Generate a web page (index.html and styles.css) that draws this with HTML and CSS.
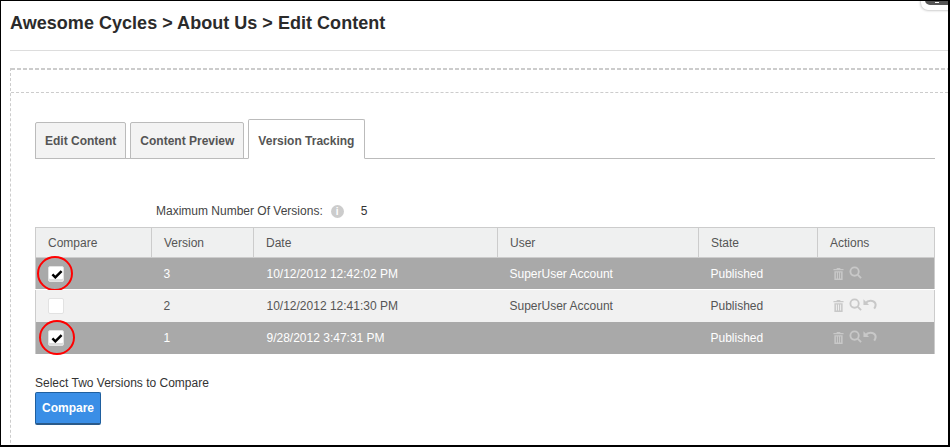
FILE: index.html
```html
<!DOCTYPE html>
<html lang="en">
<head>
    <meta charset="UTF-8">
    <title>Edit Content</title>
    <link rel="stylesheet" href="styles.css">
</head>
<body>
    <div class="frame">
        <div class="corner"><span class="corner-inner"></span></div>

        <h1 class="title">Awesome Cycles &gt; About Us &gt; Edit Content</h1>

        <div class="zone">
            <div class="zone-head"></div>
            <div class="zone-body">
                <ul class="tabs">
                    <li class="tab">Edit Content</li>
                    <li class="tab">Content Preview</li>
                    <li class="tab tab-active">Version Tracking</li>
                </ul>

                <p class="max-versions">
                    <span>Maximum Number Of Versions:</span>
                    <span class="info">i</span>
                    <span class="max-value">5</span>
                </p>

                <table class="versions">
                    <colgroup>
                        <col class="col-compare">
                        <col class="col-version">
                        <col class="col-date">
                        <col class="col-user">
                        <col class="col-state">
                        <col class="col-actions">
                    </colgroup>
                    <thead>
                        <tr>
                            <th>Compare</th>
                            <th>Version</th>
                            <th>Date</th>
                            <th>User</th>
                            <th>State</th>
                            <th>Actions</th>
                        </tr>
                    </thead>
                    <tbody>
                        <tr class="selected">
                            <td class="check-cell">
                                <span class="check on">
                                    <svg viewBox="0 0 14 12" class="tick"><path d="M1.5 6.5 L5 10 L12.5 2.5"/></svg>
                                </span>
                                <span class="ring"></span>
                            </td>
                            <td>3</td>
                            <td class="date">10/12/2012 12:42:02 PM</td>
                            <td>SuperUser Account</td>
                            <td>Published</td>
                            <td class="actions">
                                <svg class="icon trash" viewBox="0 0 12 14"><path d="M4 1h4v1h3.500v1.500h-11V2H4zM1.500 4.500h9V14h-9zM3.200 6v6.500h1V6zM5.500 6v6.500h1V6zM7.800 6v6.500h1V6z" fill-rule="evenodd"/></svg>
                                <svg class="icon lens" viewBox="0 0 14 14"><circle cx="6" cy="6" r="4.500"/><path d="M9.500 9.500 L13 13"/></svg>
                            </td>
                        </tr>
                        <tr>
                            <td class="check-cell"><span class="check"></span></td>
                            <td>2</td>
                            <td class="date">10/12/2012 12:41:30 PM</td>
                            <td>SuperUser Account</td>
                            <td>Published</td>
                            <td class="actions">
                                <svg class="icon trash" viewBox="0 0 12 14"><path d="M4 1h4v1h3.500v1.500h-11V2H4zM1.500 4.500h9V14h-9zM3.200 6v6.500h1V6zM5.500 6v6.500h1V6zM7.800 6v6.500h1V6z" fill-rule="evenodd"/></svg>
                                <svg class="icon lens" viewBox="0 0 14 14"><circle cx="6" cy="6" r="4.500"/><path d="M9.500 9.500 L13 13"/></svg>
                                <svg class="icon undo" viewBox="0 0 15 12"><path d="M3 5 C5 2 11 1.500 13 5 C14 7 13.500 9 12 11"/><path class="undo-head" d="M0.500 1 L6.500 7 L0.500 7 Z"/></svg>
                            </td>
                        </tr>
                        <tr class="selected">
                            <td class="check-cell">
                                <span class="check on">
                                    <svg viewBox="0 0 14 12" class="tick"><path d="M1.5 6.5 L5 10 L12.5 2.5"/></svg>
                                </span>
                                <span class="ring ring-low"></span>
                            </td>
                            <td>1</td>
                            <td class="date">9/28/2012 3:47:31 PM</td>
                            <td></td>
                            <td>Published</td>
                            <td class="actions">
                                <svg class="icon trash" viewBox="0 0 12 14"><path d="M4 1h4v1h3.500v1.500h-11V2H4zM1.500 4.500h9V14h-9zM3.200 6v6.500h1V6zM5.500 6v6.500h1V6zM7.800 6v6.500h1V6z" fill-rule="evenodd"/></svg>
                                <svg class="icon lens" viewBox="0 0 14 14"><circle cx="6" cy="6" r="4.500"/><path d="M9.500 9.500 L13 13"/></svg>
                                <svg class="icon undo" viewBox="0 0 15 12"><path d="M3 5 C5 2 11 1.500 13 5 C14 7 13.500 9 12 11"/><path class="undo-head" d="M0.500 1 L6.500 7 L0.500 7 Z"/></svg>
                            </td>
                        </tr>
                    </tbody>
                </table>

                <p class="hint">Select Two Versions to Compare</p>
                <button class="compare" type="button">Compare</button>
            </div>
        </div>
    </div>
</body>
</html>
```

FILE: styles.css
```css
html, body {
    margin: 0;
    padding: 0;
    background: white;
}

body {
    width: 950px;
    height: 447px;
    overflow: hidden;
    font-family: "Liberation Sans", Arial, sans-serif;
    font-size: 12px;
    color: #444;
}

.frame {
    position: relative;
    box-sizing: border-box;
    width: 950px;
    height: 447px;
    padding: 0 0 0 9px;
    border-top: 1px solid #000;
    border-left: 1px solid #000;
    border-right: 2px solid #000;
    border-bottom: 2px solid #000;
    overflow: hidden;
}

.corner {
    position: absolute;
    top: -12px;
    right: -8px;
    width: 35px;
    height: 21px;
    background: white;
    border-radius: 7px;
    box-shadow: 0 0 3px rgba(0, 0, 0, 0.4);
}

.corner-inner {
    display: block;
    position: relative;
    margin: 3px 0 0 4px;
    width: 31px;
    height: 13px;
    background: #555;
    border-radius: 5px;
}

.corner-inner::after {
    content: "";
    position: absolute;
    left: 10px;
    top: 10px;
    width: 4px;
    height: 1px;
    background: white;
}

.title {
    margin: 0;
    box-sizing: border-box;
    height: 50px;
    padding-top: 11px;
    font-size: 18px;
    line-height: 22px;
    font-weight: bold;
    letter-spacing: 0.03px;
    color: #2b2b2b;
    border-bottom: 1px solid #ddd;
}

.zone {
    margin-top: 17px;
    border-left: 1px dashed #ccc;
    height: 400px;
}

.zone-head {
    box-sizing: border-box;
    height: 25px;
    background: repeating-linear-gradient(90deg, #ccc 0 4px, transparent 4px 6px) top left / 100% 2px no-repeat;
    border-bottom: 1px dashed #ccc;
}

.zone-body {
    padding: 26px 0 0 24px;
    width: 899px;
}

.tabs {
    display: flex;
    align-items: flex-end;
    gap: 4px;
    margin: 0;
    padding: 0;
    list-style: none;
    border-bottom: 1px solid #bbb;
    width: 900px;
    height: 39px;
}

.tab {
    box-sizing: border-box;
    height: 37px;
    margin-bottom: -1px;
    padding: 0 9px;
    line-height: 36px;
    font-weight: bold;
    color: #555;
    background: #f3f3f3;
    border: 1px solid #bbb;
    border-radius: 2px 2px 0 0;
}

.tab-active {
    height: 40px;
    padding-right: 10px;
    line-height: 42px;
    background: white;
    border-bottom: 1px solid white;
}

.max-versions {
    display: flex;
    align-items: center;
    margin: 44px 0 0 121px;
    height: 16px;
    color: #444;
}

.info {
    box-sizing: border-box;
    width: 13px;
    height: 13px;
    margin-left: 8px;
    border-radius: 50%;
    background: #ccc;
    color: white;
    font-weight: bold;
    font-size: 10px;
    line-height: 13px;
    text-align: center;
}

.max-value {
    margin-left: 17px;
    color: #333;
}

.versions {
    margin-top: 8px;
    width: 900px;
    table-layout: fixed;
    border-collapse: collapse;
    border: 1px solid #ccc;
}

.col-compare { width: 116px; }
.col-version { width: 102px; }
.col-date { width: 244px; }
.col-user { width: 201px; }
.col-state { width: 119px; }
.col-actions { width: auto; }

.versions th {
    height: 29px;
    padding: 0 0 0 12px;
    font-weight: normal;
    text-align: left;
    color: #555;
    background: #eff0f0;
    border-right: 1px solid #ccc;
    border-bottom: 1px solid #ccc;
}

.versions th:last-child {
    border-right: none;
}

.versions td {
    height: 32px;
    padding: 0 0 0 12px;
    background: #f1f1f1;
    color: #555;
}

.versions .date {
    padding-left: 13px;
}

.versions .selected td {
    height: 31px;
    background: #a9a9a9;
    color: white;
    border-bottom: 1px solid white;
}

.versions .selected:last-child td {
    height: 32px;
}

.check-cell {
    position: relative;
}

.check {
    display: block;
    box-sizing: border-box;
    width: 16px;
    height: 16px;
    padding: 2px;
    background: white;
    border: 1px solid #e2e2e2;
    border-radius: 2px;
}

.check.on {
    box-shadow: inset 0 -2px 0 #ddd;
}

.tick {
    display: block;
    width: 12px;
    height: 10px;
    fill: none;
    stroke: #000;
    stroke-width: 3;
}

.ring {
    position: absolute;
    left: 1px;
    top: -2px;
    width: 32px;
    height: 31px;
    border: 2px solid #f00;
    border-radius: 50%;
}

.ring-low {
    left: 3px;
}

.actions {
    white-space: nowrap;
}

.icon {
    display: inline-block;
    vertical-align: top;
}

.trash {
    width: 11px;
    height: 13px;
    margin: 0 0 0 3px;
    fill: #c8c8c8;
}

.lens {
    width: 13px;
    height: 13px;
    margin: -1px 0 0 2px;
    fill: none;
    stroke: #c8c8c8;
    stroke-width: 2;
}

.undo {
    width: 14px;
    height: 12px;
    margin: -1px 0 0 -2px;
    fill: none;
    stroke: #c8c8c8;
    stroke-width: 2.2;
}

.undo-head {
    fill: #c8c8c8;
    stroke: none;
}

.hint {
    margin: 21px 0 0;
    line-height: 14px;
    color: #333;
}

.compare {
    display: block;
    box-sizing: border-box;
    width: 66px;
    height: 33px;
    margin-top: 2px;
    padding: 0;
    font-family: "Liberation Sans", Arial, sans-serif;
    font-size: 12px;
    font-weight: bold;
    color: white;
    background: #3a8ee6;
    border: 1px solid #1f5f9f;
    border-bottom: 2px solid #2a5a8a;
    border-radius: 2px;
}
```
